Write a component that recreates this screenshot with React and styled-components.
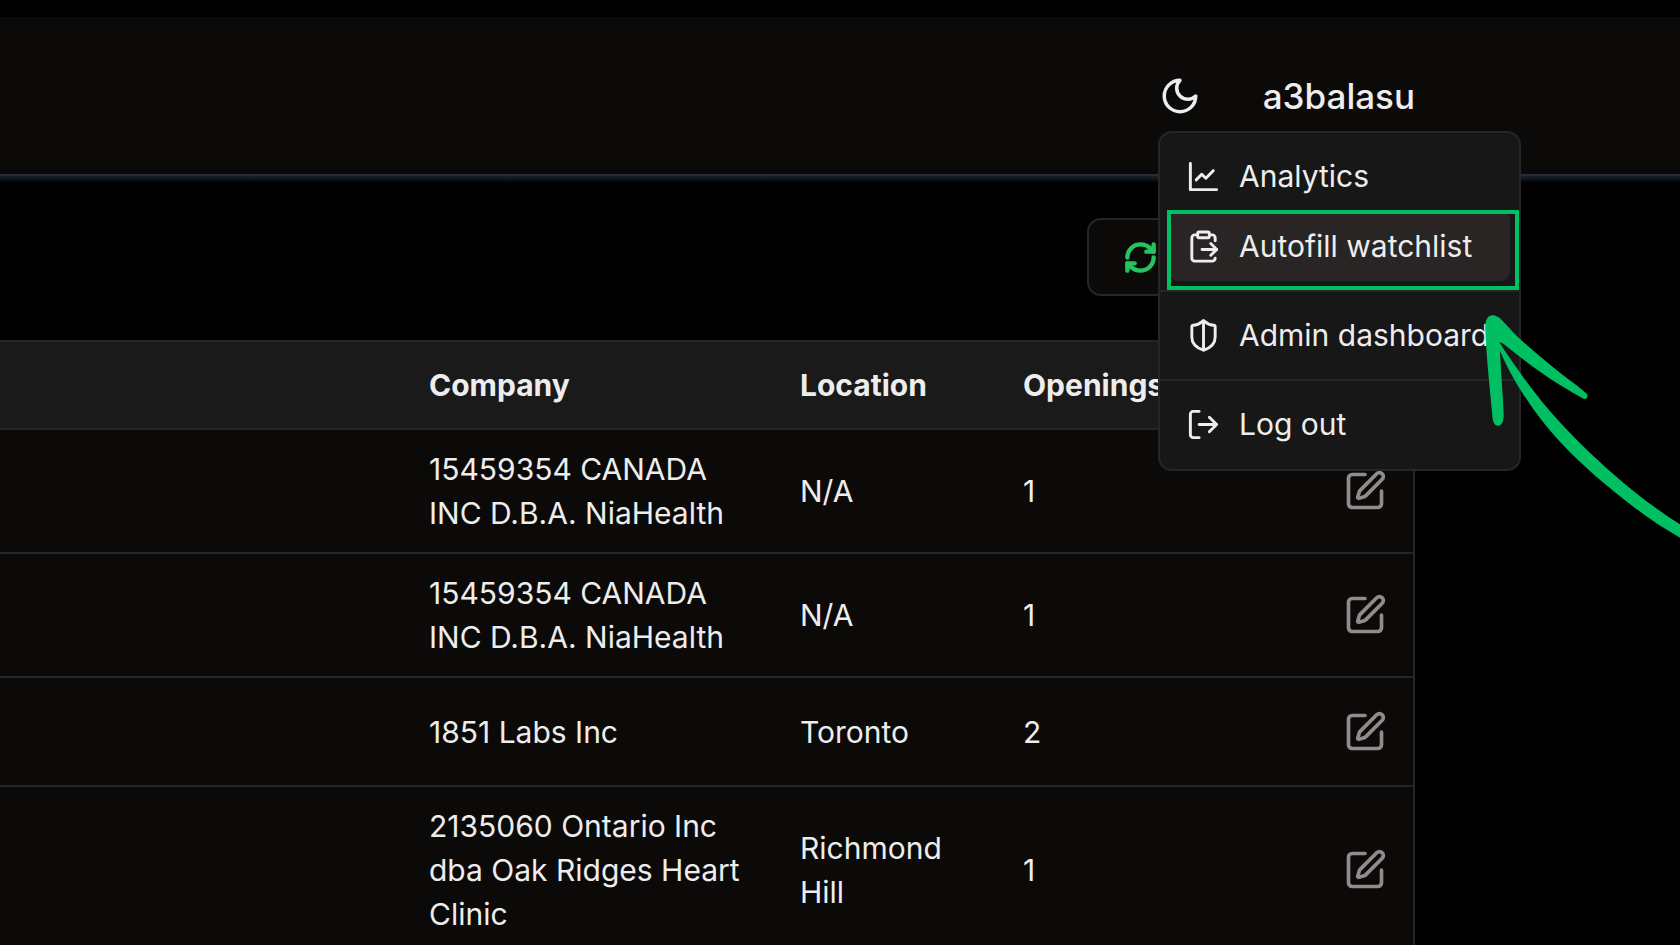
import React from "react";
import styled, { createGlobalStyle } from "styled-components";

const Global = createGlobalStyle`
  *, *::before, *::after { box-sizing: border-box; }
  body {
    margin: 0;
    background: #000;
    color: #ededed;
    font-family: Inter, "Liberation Sans", sans-serif;
    font-size: 30px;
    line-height: 44px;
  }
  button { font: inherit; color: inherit; background: none; border: 0; padding: 0; cursor: pointer; }
`;

const Page = styled.div`
  position: relative;
  height: 100vh;
  overflow: hidden;
  padding-top: 17px;
`;

const Header = styled.header`
  display: flex;
  align-items: center;
  justify-content: flex-end;
  gap: 62px;
  height: 159px;
  padding-right: 265px;
  background: #0c0a09;
  border-bottom: 2px solid #252c38;
`;

const IconButton = styled.button`
  display: flex;
  margin-left: ${(p) => (p.$end ? "auto" : 0)};
  color: ${(p) => p.$color || "inherit"};
`;

const UserButton = styled.button`
  font-size: 35px;
  font-weight: 500;
`;

const Icon = styled.svg`
  flex: none;
  width: ${(p) => p.$size}px;
  height: ${(p) => p.$size}px;
  fill: none;
  stroke: currentColor;
  stroke-width: ${(p) => p.$stroke};
  stroke-linecap: round;
  stroke-linejoin: round;
`;

const Menu = styled.nav`
  position: absolute;
  z-index: 2;
  top: 131px;
  right: 159px;
  width: 363px;
  padding: 8px 0 10px;
  background: #171717;
  border: 2px solid #262626;
  border-radius: 14px;
`;

const MenuItem = styled.button`
  display: flex;
  align-items: center;
  gap: 18px;
  width: 341px;
  height: 70px;
  margin: 0 9px;
  padding: 0 17px;
  border-radius: 9px;
  text-align: left;
  white-space: nowrap;
  background: ${(p) => (p.$active ? "#292524" : "transparent")};
`;

const Separator = styled.hr`
  height: 2px;
  margin: 9px 0 8px;
  border: 0;
  background: #262626;
`;

const Highlight = styled.div`
  position: absolute;
  z-index: 3;
  top: 210px;
  right: 161px;
  width: 352px;
  height: 80px;
  border: 4px solid #00bf63;
  pointer-events: none;
`;

const Arrow = styled.svg`
  position: absolute;
  z-index: 4;
  top: 290px;
  right: 0;
  width: 240px;
  height: 260px;
  fill: #00bf63;
  pointer-events: none;
`;

const Main = styled.main`
  padding-right: 265px;
  background: linear-gradient(#1b222d, #000 7px);
`;

const Toolbar = styled.div`
  display: flex;
  justify-content: flex-end;
  padding: 42px 0 44px;
`;

const RefreshButton = styled.button`
  display: flex;
  align-items: center;
  width: 328px;
  height: 78px;
  padding: 0 34px;
  color: #22c55e;
  background: #0c0a09;
  border: 2px solid #262626;
  border-radius: 14px;
`;

const Table = styled.table`
  width: 100%;
  table-layout: fixed;
  border-collapse: separate;
  border-spacing: 0;
  border: 2px solid #262626;
  border-left: 0;
  background: #0c0a09;
`;

const HeadCell = styled.th`
  width: ${(p) => (p.$width ? `${p.$width}px` : "auto")};
  height: 88px;
  padding: 0 17px;
  text-align: left;
  font-weight: 700;
  background: #1a1a1a;
  border-bottom: 2px solid #262626;
`;

const Cell = styled.td`
  height: 109px;
  padding: 17px ${(p) => (p.$end ? 26 : 17)}px;
  border-bottom: 2px solid #262626;
`;

const rows = [
  { company: ["15459354 CANADA", "INC D.B.A. NiaHealth"], location: ["N/A"], openings: 1 },
  { company: ["15459354 CANADA", "INC D.B.A. NiaHealth"], location: ["N/A"], openings: 1 },
  { company: ["1851 Labs Inc"], location: ["Toronto"], openings: 2 },
  { company: ["2135060 Ontario Inc", "dba Oak Ridges Heart", "Clinic"], location: ["Richmond", "Hill"], openings: 1 },
];

const Lines = ({ items }) =>
  items.map((t, i) => (
    <React.Fragment key={i}>
      {i > 0 && <br />}
      {t}
    </React.Fragment>
  ));

const Glyph = ({ size = 35, stroke = 2, children }) => (
  <Icon $size={size} $stroke={stroke} viewBox="0 0 24 24" aria-hidden="true">
    {children}
  </Icon>
);

export default function App() {
  return (
    <Page>
      <Global />
      <Header>
        <IconButton aria-label="Toggle theme">
          <Glyph size={42}>
            <path d="M12 3a6 6 0 0 0 9 9 9 9 0 1 1-9-9Z" />
          </Glyph>
        </IconButton>
        <UserButton aria-haspopup="menu">a3balasu</UserButton>
      </Header>

      <Menu aria-label="Account">
        <MenuItem>
          <Glyph>
            <path d="M3 3v18h18" />
            <path d="m18.7 8-5.1 5.2-2.8-2.7L7 14.3" />
          </Glyph>
          Analytics
        </MenuItem>
        <MenuItem $active>
          <Glyph>
            <path d="M15 2H9a1 1 0 0 0-1 1v2c0 .6.4 1 1 1h6c.6 0 1-.4 1-1V3c0-.6-.4-1-1-1Z" />
            <path d="M8 4H6a2 2 0 0 0-2 2v14a2 2 0 0 0 2 2h12a2 2 0 0 0 2-2M16 4h2a2 2 0 0 1 2 2v2M11 14h10" />
            <path d="m17 10 4 4-4 4" />
          </Glyph>
          Autofill watchlist
        </MenuItem>
        <Separator />
        <MenuItem>
          <Glyph>
            <path d="M20 13c0 5-3.5 7.5-7.66 8.95a1 1 0 0 1-.67-.01C7.5 20.5 4 18 4 13V6a1 1 0 0 1 1-1c2 0 4.5-1.2 6.24-2.72a1.17 1.17 0 0 1 1.52 0C14.51 3.81 17 5 19 5a1 1 0 0 1 1 1z" />
            <path d="M12 22V2" />
          </Glyph>
          Admin dashboard
        </MenuItem>
        <Separator />
        <MenuItem>
          <Glyph>
            <path d="M9 21H5a2 2 0 0 1-2-2V5a2 2 0 0 1 2-2h4" />
            <path d="m16 17 5-5-5-5M21 12H9" />
          </Glyph>
          Log out
        </MenuItem>
      </Menu>

      <Main>
        <Toolbar>
          <RefreshButton aria-label="Refresh">
            <Glyph stroke={3}>
              <path d="M3 12a9 9 0 0 1 9-9 9.75 9.75 0 0 1 6.74 2.74L21 8" />
              <path d="M21 3v5h-5" />
              <path d="M21 12a9 9 0 0 1-9 9 9.75 9.75 0 0 1-6.74-2.74L3 16" />
              <path d="M8 16H3v5" />
            </Glyph>
          </RefreshButton>
        </Toolbar>
        <Table>
          <thead>
            <tr>
              <HeadCell $width={412} aria-label="Job" />
              <HeadCell $width={371}>Company</HeadCell>
              <HeadCell $width={223}>Location</HeadCell>
              <HeadCell $width={223}>Openings</HeadCell>
              <HeadCell aria-label="Actions" />
            </tr>
          </thead>
          <tbody>
            {rows.map((r, i) => (
              <tr key={i}>
                <Cell />
                <Cell><Lines items={r.company} /></Cell>
                <Cell><Lines items={r.location} /></Cell>
                <Cell>{r.openings}</Cell>
                <Cell $end>
                  <IconButton $end $color="#8f8d8c" aria-label="Edit">
                    <Glyph size={44}>
                      <path d="M12 3H5a2 2 0 0 0-2 2v14a2 2 0 0 0 2 2h14a2 2 0 0 0 2-2v-7" />
                      <path d="M18.375 2.625a1 1 0 0 1 3 3l-9.013 9.014a2 2 0 0 1-.853.505l-2.873.84a.5.5 0 0 1-.62-.62l.84-2.873a2 2 0 0 1 .506-.852z" />
                    </Glyph>
                  </IconButton>
                </Cell>
              </tr>
            ))}
          </tbody>
        </Table>
      </Main>

      <Highlight />
      <Arrow viewBox="0 0 720 780" aria-hidden="true">
        <path d="M136 122C140 210 150 300 157 375C158 396 163 407 174 407C186 407 191 396 191 372C189 310 182 245 180 182C198 225 218 262 245 305C282 364 320 412 360 455C428 528 500 588 580 650C625 685 672 715 720 743V703C668 670 624 638 580 603C504 541 435 477 370 408C325 360 283 308 245 255C220 220 197 188 178 157C186 158 194 164 202 171C254 212 306 252 360 285C384 300 408 314 432 327C440 328 446 320 441 312C414 288 387 269 360 248C318 215 279 182 240 147C222 130 207 112 190 95C179 83 170 76 157 76C141 77 134 94 136 122Z" />
      </Arrow>
    </Page>
  );
}
